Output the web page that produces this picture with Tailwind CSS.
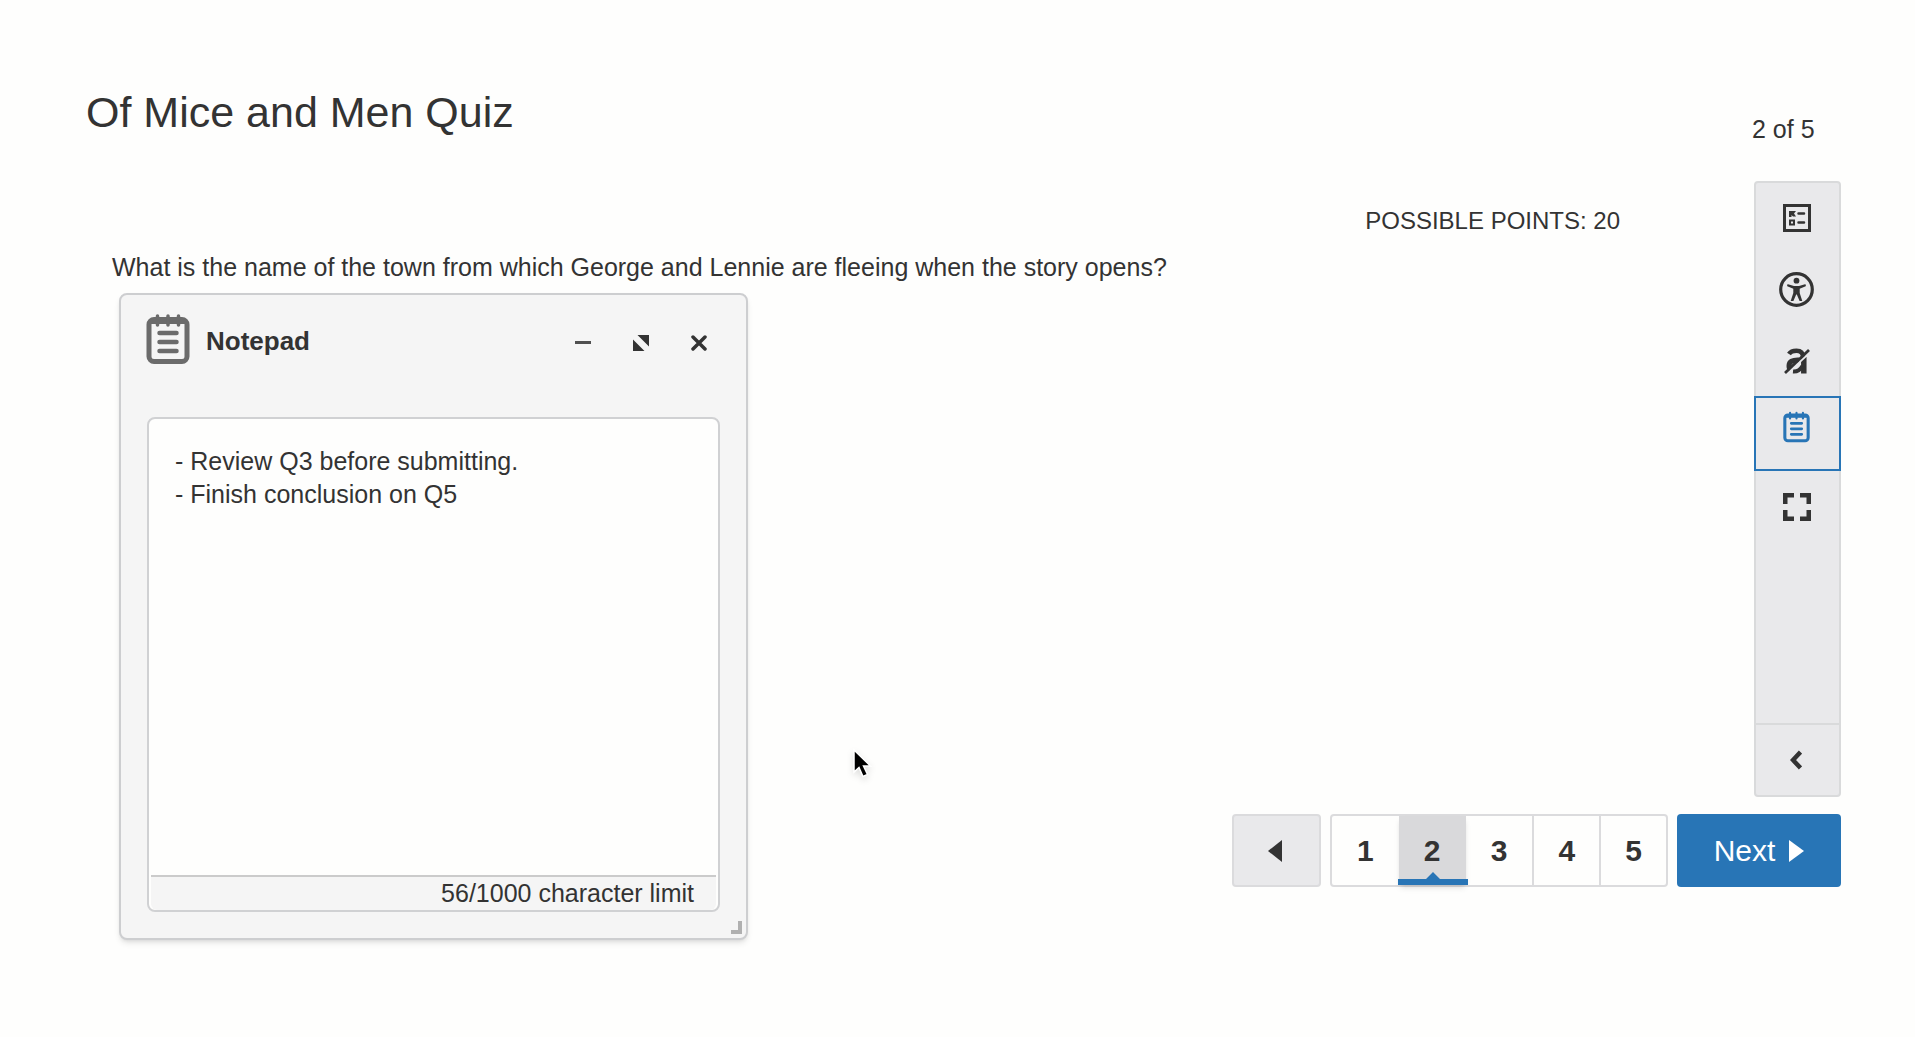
<!DOCTYPE html>
<html lang="en">
<head>
  <meta charset="UTF-8" /><meta name="viewport" content="width=device-width, initial-scale=1.0" />
  <title>Of Mice and Men Quiz</title>
  <script src="https://cdn.jsdelivr.net/npm/@tailwindcss/browser@4"></script>
</head>
<body class="relative min-h-screen bg-[#fefefd] text-[#333] font-['Liberation_Sans',Arial,sans-serif] text-[25px]">
  <div class="pt-[86px] pl-[86px] pr-[74px]">
    <header class="flex justify-between items-end">
      <h1 class="text-[43px] leading-[52px]">Of Mice and Men Quiz</h1>
      <p class="w-[89px] leading-6 -mb-[3px]">2 of 5</p>
    </header>

    <div class="flex mt-[43px]">
      <main class="relative flex-1 pt-6 pl-[26px]">
        <p class="text-right text-2xl leading-8 pr-[134px]">POSSIBLE POINTS: 20</p>
        <p class="mt-[14px] leading-8">What is the name of the town from which George and Lennie are fleeing when the story opens?</p>

        <!-- Notepad window -->
        <section class="absolute left-[33px] top-28 w-[629px] px-[26px] pb-[26px] bg-[#f5f5f5] border-2 border-[#cdced0] rounded-lg shadow-md" aria-label="Notepad">
          <div class="flex items-center pt-[18px] h-[122px] pb-[52px]">
            <svg class="w-[44px] h-[52px] -ml-px" viewBox="0 0 44 52" fill="none" stroke="#6b6b6b">
              <rect x="3" y="6.5" width="38" height="42" rx="5" stroke-width="5" />
              <path d="M4 8.5h36" stroke-width="5" />
              <path d="M11.5 3v9M22 3v9M32.5 3v9" stroke-width="3.5" stroke-linecap="round" />
              <path d="M13.5 20h17M13.5 29h17M13.5 38h17" stroke-width="4.5" stroke-linecap="round" />
            </svg>
            <h2 class="ml-4 mt-1 text-[26px] font-bold">Notepad</h2>
            <div class="flex ml-auto gap-7 mt-2 mr-1.5">
              <button class="w-[30px] h-[30px] flex items-center justify-center" aria-label="Minimize">
                <svg class="w-4 h-4" viewBox="0 0 16 16"><rect y="6" width="16" height="3" fill="#505050" /></svg>
              </button>
              <button class="w-[30px] h-[30px] flex items-center justify-center" aria-label="Expand">
                <svg class="w-4 h-4" viewBox="0 0 16 16" fill="#333"><path d="M4.5 0H16v11.5zM0 4.5V16h11.5z" /></svg>
              </button>
              <button class="w-[30px] h-[30px] flex items-center justify-center" aria-label="Close">
                <svg class="w-4 h-4" viewBox="0 0 16 16" stroke="#333" stroke-width="3.5" stroke-linecap="round"><path d="M2 2l12 12M14 2L2 14" /></svg>
              </button>
            </div>
          </div>
          <div class="p-0.5 pb-0 bg-[#fefefd] border-2 border-[#d0d1d3] rounded-lg">
            <textarea id="notes" class="block w-full h-[454px] px-6 pt-6 leading-[33px] resize-none outline-none" maxlength="1000" aria-label="Notes">- Review Q3 before submitting.
- Finish conclusion on Q5</textarea>
            <p class="border-t-2 border-[#cbcbcb] bg-[#f5f5f5] rounded-b-md text-right leading-[33px] pr-[22px]">56/1000 character limit</p>
          </div>
          <span class="absolute right-1 bottom-1 w-[11px] h-[13px] border-r-4 border-b-4 border-[#b0b0b0]"></span>
        </section>
      </main>

      <aside class="flex flex-col w-[87px] min-h-[616px] bg-[#e9e9eb] border-2 border-[#d9dadb] rounded-sm" aria-label="Tools">
        <button class="h-[71px] pr-0.5 pb-0.5 flex items-center justify-center" aria-label="Question list">
          <svg class="w-7 h-7" viewBox="0 0 28 28" fill="none" stroke="#333">
            <rect x="1.5" y="1.5" width="25" height="25" stroke-width="3" />
            <path d="M6 7h7l-2 2.500 2 3h-3l-1.500-1.500V13H6z" fill="#333" stroke="none" />
            <rect x="7" y="16.5" width="4" height="4" stroke-width="2" />
            <path d="M15.500 9.500h5.500M15.500 18.500h5.500" stroke-width="2.5" stroke-linecap="round" />
          </svg>
        </button>
        <button class="h-[71px] pr-0.5 flex items-center justify-center" aria-label="Accessibility">
          <svg class="w-[35px] h-[35px]" viewBox="0 0 35 35" fill="#333">
            <circle cx="17.5" cy="17.5" r="15.8" fill="none" stroke="#333" stroke-width="3.2" />
            <circle cx="17.5" cy="8.7" r="2.9" />
            <path d="M9 12.200l6 1.800h5l6-1.800q1.500.2.700 2l-6 2.600v4.200l2.600 8h-2.700l-2.800-6.500h-.6L14.400 29h-2.700l2.600-8v-4.200l-6-2.600q-.8-1.800.7-2z" />
          </svg>
        </button>
        <button class="h-[71px] pr-0.5 flex items-center justify-center" aria-label="Answer masking">
          <svg class="w-[26px] h-[26px]" viewBox="0 0 26 26" fill="none" stroke="#333">
            <path d="M5 6Q7 2.700 12.500 2.700Q19 2.700 19 9" stroke-width="4.5" />
            <path d="M19.800 9v16.500" stroke-width="5.5" />
            <path d="M15 12Q5 11.500 5 18Q5 21 6.500 21.500" stroke-width="5" />
            <path d="M9 23.500Q15 24 18.500 18" stroke-width="4" />
            <path d="M2 26.500L26 4.500" stroke="#e9e9eb" stroke-width="2" />
            <path d="M1 25L25 2" stroke-width="2.8" />
          </svg>
        </button>
        <button class="h-[75px] -mx-0.5 pb-3.5 pr-[3px] flex items-center justify-center border-2 border-[#2875b6]" aria-label="Notepad" aria-pressed="true">
          <svg class="w-[27px] h-8" viewBox="0 0 44 52" fill="none" stroke="#2875b6">
            <rect x="3" y="6.5" width="38" height="42" rx="5" stroke-width="5" />
            <path d="M4 8.500h36" stroke-width="5" />
            <path d="M11.500 3v9M22 3v9M32.500 3v9" stroke-width="3.5" stroke-linecap="round" />
            <path d="M13.500 20h17M13.500 29h17M13.500 38h17" stroke-width="4.5" stroke-linecap="round" />
          </svg>
        </button>
        <button class="h-[71px] pr-0.5 flex items-center justify-center" aria-label="Full screen">
          <svg class="w-7 h-7" viewBox="0 0 28 28" fill="none" stroke="#333" stroke-width="4.5">
            <path d="M2.250 11V2.250H11M17 2.250h8.750V11M25.750 17v8.750H17M11 25.750H2.250V17" />
          </svg>
        </button>
        <button class="mt-auto h-[72px] pr-1 flex items-center justify-center border-t-2 border-[#d9dadb]" aria-label="Collapse">
          <svg class="w-3 h-5" viewBox="0 0 12 20" fill="none" stroke="#333" stroke-width="4.5"><path d="M10.500 2L3 10l7.500 8" /></svg>
        </button>
      </aside>
    </div>

    <nav class="flex justify-end gap-[9px] mt-[17px] text-[30px]" aria-label="Questions">
      <button class="w-[89px] h-[73px] pr-1 flex items-center justify-center bg-[#e9e9eb] border-2 border-[#dbdbdd] rounded-sm" aria-label="Previous">
        <svg class="w-[14px] h-[22px]" viewBox="0 0 14 22" fill="#333"><path d="M14 0v22L0 11z" /></svg>
      </button>
      <div class="grid grid-cols-5 w-[338px] border-2 border-[#dbdbdd] rounded-sm font-bold">
        <button>1</button>
        <button class="relative bg-[#d9d9db] shadow-md" aria-current="page">2
          <svg class="absolute -right-0.5 bottom-0 w-[70px] h-[13px]" viewBox="0 0 70 13" fill="#2875b6"><path d="M0 7h28l7-7 7 7h28v6H0z" /></svg>
        </button>
        <button>3</button>
        <button class="border-l-2 border-[#dbdbdd]">4</button>
        <button class="border-l-2 border-[#dbdbdd]">5</button>
      </div>
      <button class="w-[164px] flex items-center justify-center gap-[14px] bg-[#2875b6] text-white rounded-sm">Next
        <svg class="w-[15px] h-[22px]" viewBox="0 0 15 22" fill="#fff"><path d="M0 0v22l15-11z" /></svg>
      </button>
    </nav>
  </div>

  <!-- Mouse pointer -->
  <svg class="absolute left-[851px] top-[748px] w-[22px] h-[34px] drop-shadow-md" viewBox="0 0 22 34">
    <path d="M3 2v22l5-4.500 4 9 4.500-2-4-8.500h7z" fill="#000" stroke="#fff" stroke-width="1.5" />
  </svg>

  <script>
    const notes = document.getElementById('notes');
    notes.addEventListener('input', () => {
      notes.nextElementSibling.textContent = `${notes.value.length}/1000 character limit`;
    });
  </script>
</body>
</html>
